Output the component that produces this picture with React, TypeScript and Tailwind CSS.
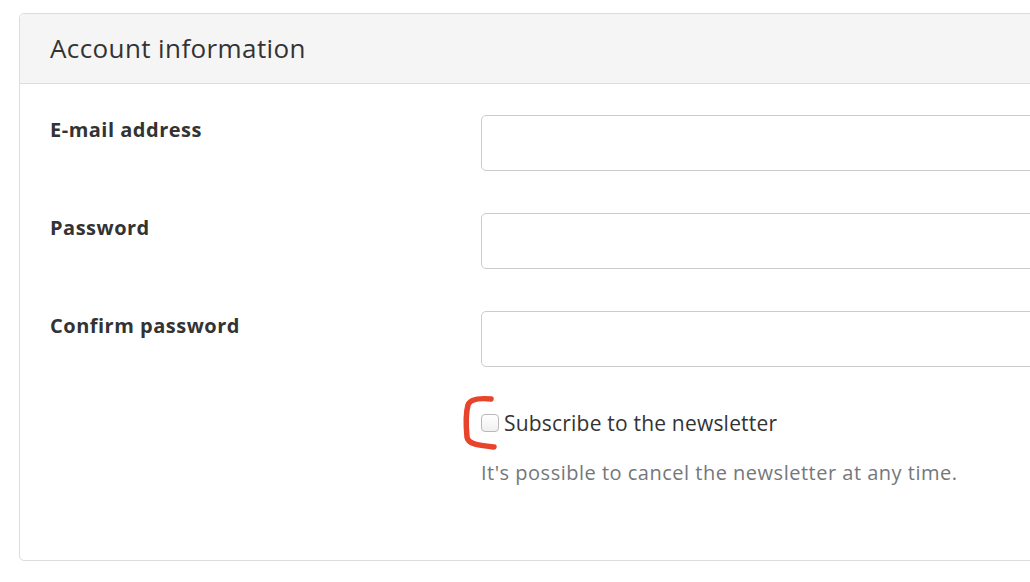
export default function App() {
  const fields = ["E-mail address", "Password", "Confirm password"];

  return (
    <div className="h-[582px] w-[1030px] overflow-hidden bg-white font-['Open_Sans','Lato',sans-serif] text-[#333]">
      <div className="ml-[19px] mt-[13px] w-[1100px] rounded-[5px] border border-[#dddddd] bg-white">
        {/* Header */}
        <div className="h-[70px] rounded-t-[5px] border-b border-[#dddddd] bg-[#f5f5f5] pl-[30px] pt-[17px]">
          <h2 className="text-[26px] leading-[34px] font-normal tracking-[0.4px]">Account information</h2>
        </div>

        {/* Body */}
        <div className="pl-[30px] pt-[31px] pb-[74px]">
          {fields.map((label) => (
            <div key={label} className="mb-[42px] grid grid-cols-[431px_1fr]">
              <label className="pt-[2px] text-[20px] leading-[26px] font-bold tracking-[0.5px]">{label}</label>
              <input
                type="text"
                className="h-[56px] w-full rounded-[5px] border border-[#cccccc] bg-white"
              />
            </div>
          ))}

          {/* Newsletter */}
          <div className="grid grid-cols-[431px_1fr]">
            <div />
            <div>
              <div className="relative flex items-center">
                {/* hand-drawn annotation */}
                <svg
                  className="absolute left-[-21px] top-[-15px]"
                  width="40"
                  height="60"
                  viewBox="0 0 40 60"
                  fill="none"
                >
                  <path
                    d="M31 5 C20 4 10 5 8 11 C6 18 6 32 7 43 C8 50 17 51 34 53"
                    stroke="#e8432b"
                    strokeWidth="5.5"
                    strokeLinecap="round"
                  />
                </svg>
                <span className="relative h-[18px] w-[18px] rounded-[4px] border border-[#b9b9b9] bg-gradient-to-b from-white to-[#f0f0f0]" />
                <span className="ml-[5px] text-[21px] leading-[28px] tracking-[0.2px]">Subscribe to the newsletter</span>
              </div>
              <p className="mt-[23px] text-[20px] leading-[26px] tracking-[0.5px] text-[#74777b]">
                It's possible to cancel the newsletter at any time.
              </p>
            </div>
          </div>
        </div>
      </div>
    </div>
  );
}
